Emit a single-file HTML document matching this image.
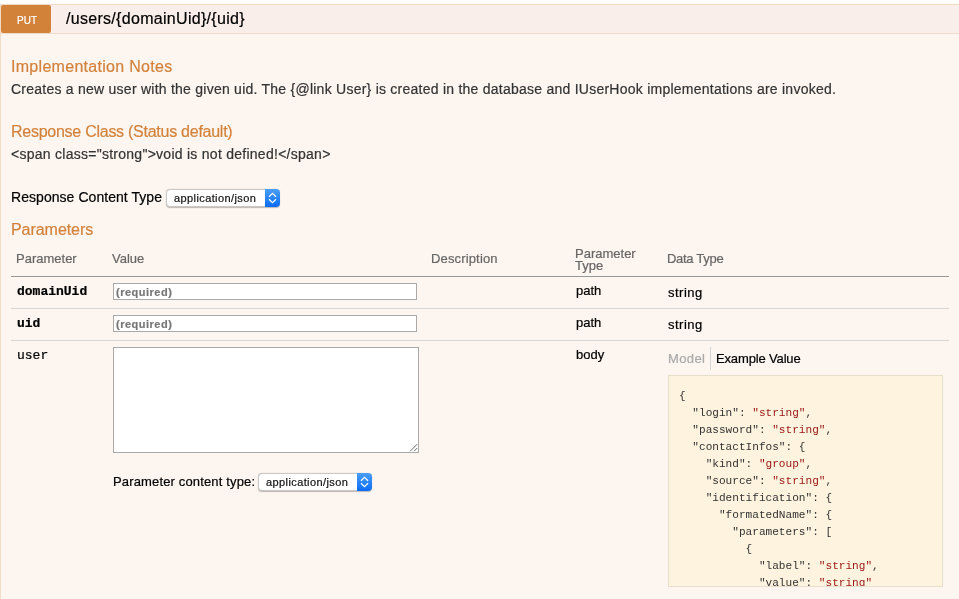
<!DOCTYPE html>
<html><head><meta charset="utf-8">
<style>
*{box-sizing:border-box;margin:0;padding:0}
html,body{will-change:transform;-webkit-text-stroke:0.2px;width:959px;height:599px;overflow:hidden;background:#fff;font-family:"Liberation Sans",sans-serif}
.a{position:absolute;white-space:pre;line-height:1}
#hd{position:absolute;left:0;top:4px;width:960px;height:30px;background:#faeeea;border:1px solid #f0dcc6}
#badge{position:absolute;left:1px;top:5px;width:50px;height:28px;background:#d3823a;border-radius:2px}
#ct{position:absolute;left:0;top:34px;width:960px;height:580px;background:#fcf5f0;border-left:1px solid #f0dcc6}
.h4{color:#d3823a;font-size:16px}
.txt{color:#333;font-size:14px}
.th{color:#666;font-size:13px}
.td{color:#000;font-size:13px}
.mono{font-family:"Liberation Mono",monospace;font-size:13px;color:#000}
.line{position:absolute;left:11px;width:938px;height:1px}
.inp{position:absolute;background:#fff;border:1px solid #a9a9a9}
.sel{position:absolute;background:#fff;border:1px solid #c8c8c8;border-radius:4px;box-shadow:0 0.5px 1px rgba(0,0,0,.25)}
.sel svg{position:absolute;right:-1px;top:-1px}
.sel span{position:absolute;left:7px;top:3px;font-size:11px;letter-spacing:0.4px;color:#111;white-space:pre;line-height:1}
pre{-webkit-text-stroke:0;font-family:"Liberation Mono",monospace;font-size:11.1px;line-height:17px;color:#333}
.s{color:#991515}
</style></head><body>
<div id="hd"></div>
<div id="badge"></div>
<div class="a" style="left:17px;top:16px;font-size:10px;color:#fff">PUT</div>
<div class="a" style="left:66px;top:11px;font-size:16px;color:#000;letter-spacing:0.3px">/users/{domainUid}/{uid}</div>

<div id="ct"></div>
<div class="a h4" style="left:11px;top:59px;letter-spacing:0.29px">Implementation Notes</div>
<div class="a txt" style="left:11px;top:82px;letter-spacing:0.245px">Creates a new user with the given uid. The {@link User} is created in the database and IUserHook implementations are invoked.</div>
<div class="a h4" style="left:11px;top:124px;letter-spacing:-0.26px">Response Class (Status default)</div>
<div class="a txt" style="left:11px;top:147px;letter-spacing:0.265px">&lt;span class="strong"&gt;void is not defined!&lt;/span&gt;</div>
<div class="a" style="left:11px;top:190px;font-size:14px;color:#000;letter-spacing:0.05px">Response Content Type</div>
<div class="sel" style="left:166px;top:189px;width:114px;height:18px"><span>application/json</span><svg width="15" height="18" viewBox="0 0 15 18"><defs><linearGradient id="g" x1="0" y1="0" x2="0" y2="1"><stop offset="0" stop-color="#4a9ff9"/><stop offset="1" stop-color="#0b6cf4"/></linearGradient></defs><path d="M0 0H11A4 4 0 0 1 15 4V14A4 4 0 0 1 11 18H0Z" fill="url(#g)"/><path d="M4 7.8L7.5 4.4L11 7.8M4 10.2L7.5 13.6L11 10.2" fill="none" stroke="#fff" stroke-width="1.2"/></svg></div>
<div class="a h4" style="left:11px;top:222px;letter-spacing:-0.05px">Parameters</div>

<div class="a th" style="left:16px;top:252px">Parameter</div>
<div class="a th" style="left:112px;top:252px">Value</div>
<div class="a th" style="left:431px;top:252px;letter-spacing:0.15px">Description</div>
<div class="a th" style="left:575px;top:247.5px;line-height:12px">Parameter<br>Type</div>
<div class="a th" style="left:667px;top:252px;letter-spacing:-0.3px">Data Type</div>
<div class="line" style="top:276px;background:#999"></div>

<div class="a mono" style="left:17px;top:285px;font-weight:bold">domainUid</div>
<div class="inp" style="left:113px;top:283px;width:304px;height:17px"></div>
<div class="a" style="left:116px;top:287px;font-size:11px;font-weight:bold;color:#777;letter-spacing:0.5px">(required)</div>
<div class="a td" style="left:576px;top:284px">path</div>
<div class="a td" style="left:668px;top:286px;letter-spacing:0.5px">string</div>
<div class="line" style="top:308px;background:#d6d6d6"></div>

<div class="a mono" style="left:17px;top:317px;font-weight:bold">uid</div>
<div class="inp" style="left:113px;top:315px;width:304px;height:17px"></div>
<div class="a" style="left:116px;top:319px;font-size:11px;font-weight:bold;color:#777;letter-spacing:0.5px">(required)</div>
<div class="a td" style="left:576px;top:316px">path</div>
<div class="a td" style="left:668px;top:318px;letter-spacing:0.5px">string</div>
<div class="line" style="top:340px;background:#d6d6d6"></div>

<div class="a mono" style="left:17px;top:349px">user</div>
<div class="inp" style="left:113px;top:347px;width:306px;height:106px"></div>
<svg style="position:absolute;left:408px;top:442px" width="10" height="10" viewBox="0 0 10 10"><path d="M2.2 9.2L9.2 2.2M6 9.2L9.2 6" stroke="#666" stroke-width="1" fill="none"/></svg>
<div class="a td" style="left:113px;top:475px;letter-spacing:0.15px">Parameter content type:</div>
<div class="sel" style="left:258px;top:473px;width:114px;height:18px"><span>application/json</span><svg width="15" height="18" viewBox="0 0 15 18"><defs><linearGradient id="g" x1="0" y1="0" x2="0" y2="1"><stop offset="0" stop-color="#4a9ff9"/><stop offset="1" stop-color="#0b6cf4"/></linearGradient></defs><path d="M0 0H11A4 4 0 0 1 15 4V14A4 4 0 0 1 11 18H0Z" fill="url(#g)"/><path d="M4 7.8L7.5 4.4L11 7.8M4 10.2L7.5 13.6L11 10.2" fill="none" stroke="#fff" stroke-width="1.2"/></svg></div>
<div class="a td" style="left:576px;top:348px">body</div>
<div class="a" style="left:668px;top:352px;font-size:13px;color:#aaa;letter-spacing:0.4px">Model</div>
<div style="position:absolute;left:710px;top:347px;width:1px;height:23px;background:#d6d6d6"></div>
<div class="a td" style="left:716px;top:352px;letter-spacing:-0.15px">Example Value</div>
<div style="position:absolute;left:668px;top:375px;width:275px;height:212px;background:#fdf3de;border:1px solid #e8dfca;overflow:hidden">
<pre style="padding:12px 10px">{
  "login": <span class="s">"string"</span>,
  "password": <span class="s">"string"</span>,
  "contactInfos": {
    "kind": <span class="s">"group"</span>,
    "source": <span class="s">"string"</span>,
    "identification": {
      "formatedName": {
        "parameters": [
          {
            "label": <span class="s">"string"</span>,
            "value": <span class="s">"string"</span>
          }
        ]
      }
    }
  }
}</pre>
</div>
</body></html>
